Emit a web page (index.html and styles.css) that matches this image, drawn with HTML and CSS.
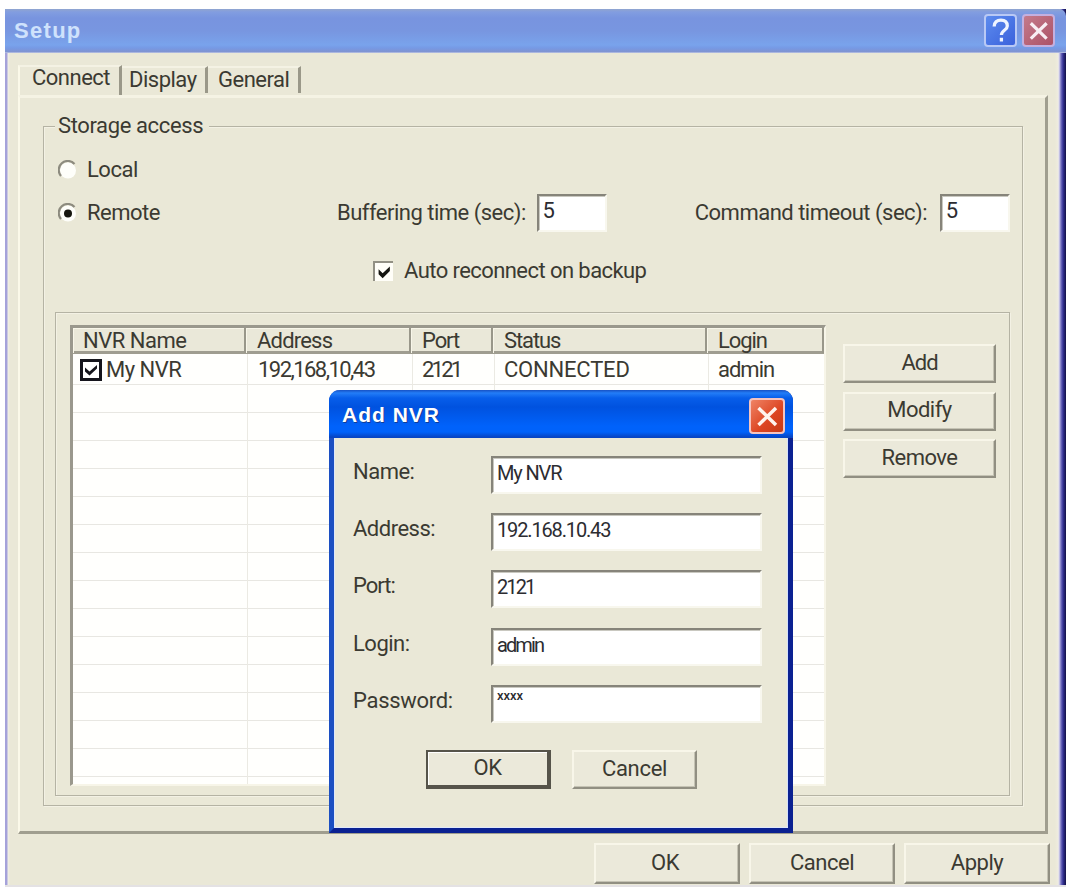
FILE: index.html
```html
<!DOCTYPE html>
<html lang="en">
<head>
<meta charset="utf-8">
<title>Setup</title>
<link rel="stylesheet" href="styles.css">
</head>
<body>
<main class="window">
  <header class="titlebar">
    <h1 class="title">Setup</h1>
    <button class="cap help" aria-label="Help"><svg viewBox="0 0 32 32"><path d="M9 11.500C9 7 12 4.500 16.500 4.500C21 4.500 23.500 7 23.500 11C23.500 16 17 15.500 17 21M17 24V28" fill="none" stroke="#eef4ff" stroke-width="3.600"/></svg></button>
    <button class="cap close" aria-label="Close"><svg viewBox="0 0 32 32"><path d="M7.500 8L25 25M25 8L7.500 25" fill="none" stroke="#f8eef4" stroke-width="3.500"/></svg></button>
  </header>
  <nav class="tabs">
    <span class="tab active"><span class="connect">Connect</span></span>
    <span class="tab display"><span>Display</span></span>
    <span class="tab general"><span>General</span></span>
  </nav>
  <section class="page">
    <div class="group">
      <div class="legend"><span>Storage access</span></div>
      <div class="radio-row"><svg class="radio" viewBox="0 0 20 20"><circle cx="10" cy="10.500" r="8" fill="#fefefa"/><path d="M3 16A9 9 0 0 1 16.500 4" fill="none" stroke="#8d8b7f" stroke-width="2.200"/></svg><span class="local">Local</span></div>
      <div class="settings">
        <svg class="radio" viewBox="0 0 20 20"><circle cx="10" cy="10.500" r="8" fill="#fefefa"/><path d="M3 16A9 9 0 0 1 16.500 4" fill="none" stroke="#8d8b7f" stroke-width="2.200"/><circle cx="10" cy="10.500" r="4" fill="#16160f"/></svg>
        <span class="remote">Remote</span>
        <span class="buffering">Buffering time (sec):</span>
        <span class="field small">5</span>
        <span class="timeout">Command timeout (sec):</span>
        <span class="field small second">5</span>
      </div>
      <div class="auto-row"><span class="check"><svg viewBox="0 0 20 20"><path d="M4 7L8.500 11.500L16.500 4V9L8.500 17L4 12.500Z" fill="#15150f"/></svg></span><span class="auto">Auto reconnect on backup</span></div>
      <div class="servers">
        <div class="list">
          <div class="row head"><span class="h-name">NVR Name</span><span class="h-address">Address</span><span class="h-port">Port</span><span class="h-status">Status</span><span class="h-login">Login</span></div>
          <div class="row data"><span class="name-cell"><svg class="box" viewBox="0 0 22 22"><path d="M1.500 1.500H20.500V20.500H1.500Z" fill="#fff" stroke="#15151c" stroke-width="3"/><path d="M5 8.500L9.500 12.500L17 6V9.500L9.500 16.500L5 12.500Z" fill="#15151c"/></svg><span class="my">My NVR</span></span><span class="ip">192,168,10,43</span><span class="port-v">2121</span><span class="status-v">CONNECTED</span><span class="login-v">admin</span></div>
          <div class="grid-lines"><i></i><i></i><i></i><i></i><i></i></div>
        </div>
        <div class="actions">
          <button class="btn"><span class="b-add">Add</span></button>
          <button class="btn"><span class="b-modify">Modify</span></button>
          <button class="btn"><span class="b-remove">Remove</span></button>
        </div>
      </div>
    </div>
  </section>
  <footer class="footer">
    <button class="btn"><span class="f-ok">OK</span></button>
    <button class="btn"><span class="f-cancel">Cancel</span></button>
    <button class="btn"><span class="f-apply">Apply</span></button>
  </footer>
</main>
<section class="dialog">
  <header class="dialog-title">
    <h2>Add NVR</h2>
    <button class="cap red" aria-label="Close"><svg viewBox="0 0 32 32"><path d="M7.500 8L25 25M25 8L7.500 25" fill="none" stroke="#fff3ed" stroke-width="3.500"/></svg></button>
  </header>
  <div class="form">
    <label class="l-name">Name:</label><span class="field v-name">My NVR</span>
    <label class="l-address">Address:</label><span class="field v-ip">192.168.10.43</span>
    <label class="l-port">Port:</label><span class="field v-port">2121</span>
    <label class="l-login">Login:</label><span class="field v-login">admin</span>
    <label class="l-pass">Password:</label><span class="field v-pass">xxxx</span>
  </div>
  <div class="dialog-buttons">
    <button class="btn default"><span>OK</span></button>
    <button class="btn"><span class="b-cancel">Cancel</span></button>
  </div>
</section>
</body>
</html>
```

FILE: styles.css
```css
* { box-sizing: border-box; }
body { margin: 0; width: 1067px; height: 887px; overflow: hidden; position: relative; background: #fff; color: #3b3a32; font: 22px/26px Roboto, "Liberation Sans", sans-serif; letter-spacing: -.5px; }
button { font: inherit; color: inherit; letter-spacing: inherit; padding: 0; margin: 0; }
span, label { white-space: nowrap; }
svg { display: block; flex: none; }

.window { margin: 9px 1px 0 5px; height: 878px; background: linear-gradient(90deg, #a5a2da 0 2px, #f1f0e6 3px, #eae8d7 5px, #eae8d7 1050px, #eeecdf 1053px, #dcdaf0 1054px, #7470c0 1056px, #343294 1058px, #121047 1061px); display: flex; flex-direction: column; }
.titlebar { height: 44px; flex: none; display: flex; align-items: flex-start; padding: 5px 11px 0 9px; background: linear-gradient(#91a5cf 0, #829de0 3px, #7894df 9px, #7896e0 22px, #79a3ec 36px, #7699e5 39px, #8093cf 43px, #d5daee 44px); border-radius: 0 7px 0 0; }
.title { margin: 4px auto 0 0; font: bold 22px/26px "Liberation Sans", sans-serif; color: #cfe2fc; letter-spacing: 1.3px; }
.cap { width: 33px; height: 33px; border: 2px solid #b9c9f5; border-radius: 4px; display: flex; }
.cap svg { width: 29px; height: 29px; }
.help { background: linear-gradient(135deg, #5c8bee, #3b62dc); margin-right: 5px; }
.close { background: linear-gradient(135deg, #c47a8b, #ac5267); border-color: #c4b0df; }

.tabs { height: 42px; flex: none; display: flex; align-items: flex-end; padding-left: 13px; }
.tab { height: 27px; border-top: 2px solid #f4f2e4; border-right: 3px solid #9a9889; line-height: 24px; margin-bottom: 2px; }
.tab.active { height: 30px; width: 104px; padding-left: 12px; border-left: 2px solid #fbf9e9; margin-bottom: 0; line-height: 21px; }
.display { width: 86px; padding-left: 7px; }
.general { width: 93px; padding-left: 10px; }

.page { height: 739px; flex: none; margin: 0 18px 0 13px; border: 2px solid #fbf9e9; border-top: 3px solid #f5f3e4; border-right: 3px solid #a09e8f; border-bottom: 3px solid #a09e8f; padding: 28px 22px 0 23px; }
.group { height: 680px; border: 1px solid #b5b3a4; box-shadow: inset 1px 1px #f3f1e4, 1px 1px #f3f1e4; padding: 0 12px 0 11px; }
.legend { height: 26px; margin-top: -14px; }
.legend span { display: inline-block; background: #eae8d7; padding: 0 6px 0 3px; letter-spacing: -.38px; line-height: 24px; }
.radio-row, .settings, .auto-row { display: flex; align-items: center; }
.radio { width: 20px; height: 20px; margin-left: 3px; }
.radio-row { height: 30px; margin-top: 16px; }
.radio-row span, .settings .remote { margin-left: 9px; }
.radio-row span, .settings > span:not(.field), .auto { padding-bottom: 1px; }
.settings { height: 38px; margin-top: 9px; }
.remote { width: 88px; }
.buffering { width: 202px; margin-left: 163px; }
.timeout { width: 248px; margin-left: 88px; }
.field { display: block; background: #fff; border: 2px solid #86847a; border-right: 2px solid #f8f7ee; border-bottom: 2px solid #f8f7ee; box-shadow: inset 1px 1px #c9c8c0; height: 38px; padding-left: 4px; line-height: 30px; font-size: 20px; color: #2c2c31; }
.small { width: 71px; font-size: 22px; line-height: 29px; }
.auto-row { height: 30px; margin: 24px 0 0 318px; }
.check { width: 20px; height: 20px; background: #fffef8; border-top: 2px solid #929084; border-left: 2px solid #929084; }
.check svg { width: 18px; height: 18px; }
.auto { margin-left: 11px; letter-spacing: -.57px; }

.servers { height: 484px; margin-top: 26px; border: 1px solid #b5b3a4; box-shadow: inset 1px 1px #f3f1e4, 1px 1px #f3f1e4; padding: 12px 13px 0 14px; display: flex; justify-content: space-between; }
.list { width: 756px; height: 461px; background: #fffffd; border: 3px solid #9a988d; border-right: 2px solid #f7f5e8; border-bottom: 2px solid #f7f5e8; display: flex; flex-direction: column; }
.row, .grid-lines { display: grid; grid-template-columns: 173px 165px 82px 214px 1fr; }
.head { height: 26px; flex: none; background: #eae8d9; border-bottom: 3px solid #9f9d90; line-height: 25px; }
.head > span { border-right: 2px solid #99978a; padding-left: 10px; box-shadow: inset 1px 1px #f8f6e9; }
.head > span + span { padding-left: 11px; }
.h-address { letter-spacing: -.8px; }
.h-port, .h-status, .h-login { letter-spacing: -1.1px; }
.data { height: 31px; flex: none; line-height: 32px; }
.data > span { padding-left: 9px; }
.data .name-cell { display: flex; align-items: center; padding-left: 5px; }
.data .ip { padding-left: 10px; letter-spacing: -1.55px; }
.port-v { letter-spacing: -2.8px; }
.status-v { letter-spacing: -.2px; }
.login-v { letter-spacing: -1px; }
.box { width: 22px; height: 22px; margin-right: 4px; }
.grid-lines { flex: 1; background: repeating-linear-gradient(transparent 0 27px, #e8e7e2 27px 28px); border-top: 1px solid #e8e7e2; margin-top: -1px; }
.grid-lines i, .data > span { border-right: 1px solid #ebeae3; position: relative; left: 2px; }
.grid-lines i:last-child, .data > span:last-child { border-right: 0; }
.actions { width: 153px; margin-top: 19px; display: flex; flex-direction: column; gap: 8.500px; }
.btn { height: 39px; flex: none; background: #ebe9da; border: 2px solid #f8f6e9; border-right: 2px solid #918f82; border-bottom: 2px solid #918f82; box-shadow: inset -1px -1px #c5c3b4; line-height: 30px; display: flex; justify-content: center; align-items: center; }
.btn span { padding-bottom: 2px; }
.b-add { letter-spacing: -1px; }

.footer { height: 53px; display: flex; gap: 9px; padding: 9px 16px 0 0; justify-content: flex-end; border-bottom: 2px solid #e4e2e4; }
.footer .btn { width: 146px; height: 41px; }
.footer .btn:first-child span { padding-right: 4px; }

.dialog { position: absolute; left: 329px; top: 390px; width: 464px; height: 443px; background: #eae8d7; border: solid #0b2191; border-width: 0 5px 5px; border-left-color: #1c4fc2; border-radius: 11px 11px 0 0; box-shadow: inset 1px -1px #dfe8fa, inset -1px 0 #d5e1fc; }
.dialog-title { height: 48px; margin: 0 -5px; padding: 8px 8px 0 13px; border-radius: 11px 11px 0 0; display: flex; justify-content: space-between; background: linear-gradient(#1751c4 0, #237df7 3px, #075eea 8px, #0052df 17px, #0062fb 36px, #0062fa 42px, #0745c4 47px); }
.dialog-title h2 { margin: 4px 0 0; font: bold 21px/26px "Liberation Sans", sans-serif; color: #fff; text-shadow: 1px 1px #123c96; letter-spacing: 1px; }
.dialog-title .cap { width: 36px; height: 36px; border-color: #f5c4c0; }
.dialog-title .cap svg { width: 32px; height: 32px; }
.red { background: linear-gradient(135deg, #ef8365, #dc4421 60%, #c53a17); }
.form { display: grid; grid-template-columns: 138px 271px; grid-auto-rows: 38px; row-gap: 19.250px; padding: 18px 0 0 19px; }
.form label { line-height: 32px; }
.form .l-port, .form .v-port { margin-top: -1px; }
.l-port { letter-spacing: -1px; }
.l-pass { letter-spacing: -.3px; }
.v-name, .v-ip { letter-spacing: -1.15px; }
.v-port, .v-login { letter-spacing: -1.9px; }
.v-pass { font-size: 13px; line-height: 17px; font-weight: 500; letter-spacing: 0; }
.dialog-buttons { display: flex; gap: 21px; padding: 27px 0 0 92px; }
.dialog-buttons .btn { width: 125px; }
.b-cancel { letter-spacing: -.3px; }
.dialog-buttons .default { border: 2px solid #56544a; border-right-width: 4px; border-bottom-width: 4px; box-shadow: inset 1px 1px #fff; }
```
